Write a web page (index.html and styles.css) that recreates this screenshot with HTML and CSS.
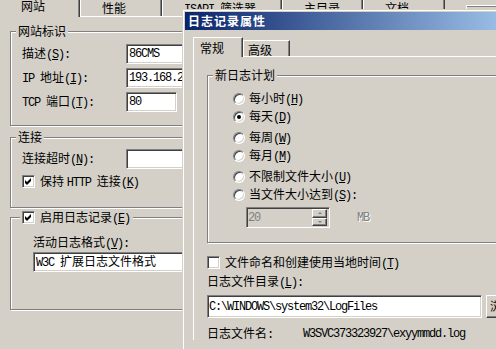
FILE: index.html
```html
<!DOCTYPE html>
<html lang="zh-CN">
<head>
<meta charset="utf-8">
<title>日志记录属性</title>
<link rel="stylesheet" href="styles.css">
</head>
<body>
<div class="back">
  <div class="btabs">
    <div class="btab sel w82">网站</div>
    <div class="btab w82">性能</div>
    <div class="btab w120"><span class="m">ISAPI </span>筛选器</div>
    <div class="btab w81">主目录</div>
    <div class="btab w82">文档</div>
    <div class="btab gapt"></div>
    <div class="btab rest"></div>
  </div>
  <div class="bpanel">
    <div class="grp g1">
      <div class="gt">网站标识</div>
      <div class="frow"><span class="lbl">描述<span class="m">(<u>S</u>):</span></span><div class="edit wide"><span class="m">86CMS</span></div></div>
      <div class="frow"><span class="lbl"><span class="m">IP </span>地址<span class="m">(<u>I</u>):</span></span><div class="edit wide"><span class="m">193.168.2.10</span></div></div>
      <div class="frow"><span class="lbl"><span class="m">TCP </span>端口<span class="m">(<u>T</u>):</span></span><div class="edit port"><span class="m">80</span></div></div>
    </div>
    <div class="grp g2">
      <div class="gt">连接</div>
      <div class="frow"><span class="lbl">连接超时<span class="m">(<u>N</u>):</span></span><div class="edit wide"></div></div>
      <div class="crow">
        <span class="cb"><svg width="7" height="7" viewBox="0 0 7 7"><polygon points="0,2 2,4 6,0 6,3 2,7 0,5"/></svg></span>
        <span>保持 <span class="m">HTTP </span>连接<span class="m">(<u>K</u>)</span></span>
      </div>
    </div>
    <div class="grp g3">
      <div class="gt gtc">
        <span class="cb"><svg width="7" height="7" viewBox="0 0 7 7"><polygon points="0,2 2,4 6,0 6,3 2,7 0,5"/></svg></span>
        <span>启用日志记录<span class="m">(<u>E</u>)</span></span>
      </div>
      <div class="plain">活动日志格式<span class="m">(<u>V</u>):</span></div>
      <div class="edit combo"><span><span class="m">W3C </span>扩展日志文件格式</span></div>
    </div>
  </div>
</div>

<div class="win">
  <div class="title">日志记录属性</div>
  <div class="fbody">
    <div class="ftabs">
      <div class="ftab sel">常规</div>
      <div class="ftab adv">高级</div>
    </div>
    <div class="fpanel">
      <div class="grp fg">
        <div class="gt">新日志计划</div>
        <div class="ropt"><span class="rd"></span><span>每小时<span class="m">(<u>H</u>)</span></span></div>
        <div class="ropt"><span class="rd on"></span><span>每天<span class="m">(<u>D</u>)</span></span></div>
        <div class="ropt sp"><span class="rd"></span><span>每周<span class="m">(<u>W</u>)</span></span></div>
        <div class="ropt"><span class="rd"></span><span>每月<span class="m">(<u>M</u>)</span></span></div>
        <div class="ropt sp"><span class="rd"></span><span>不限制文件大小<span class="m">(<u>U</u>)</span></span></div>
        <div class="ropt"><span class="rd"></span><span>当文件大小达到<span class="m">(<u>S</u>):</span></span></div>
        <div class="spinrow">
          <div class="spin">
            <span class="m spinval">20</span>
            <div class="spinbtns">
              <span class="sbtn"><i class="up"></i></span>
              <span class="sbtn"><i class="dn"></i></span>
            </div>
          </div>
          <span class="m mb">MB</span>
        </div>
      </div>
      <div class="crow lt">
        <span class="cb"></span>
        <span>文件命名和创建使用当地时间<span class="m">(<u>T</u>)</span></span>
      </div>
      <div class="plain dl">日志文件目录<span class="m">(<u>L</u>):</span></div>
      <div class="pathrow">
        <div class="edit path"><span class="m">C:\WINDOWS\system32\LogFiles</span></div>
        <div class="btn"><span>浏览<span class="m">(<u>R</u>)...</span></span></div>
      </div>
      <div class="fnrow">
        <span class="fnl">日志文件名<span class="m">:</span></span>
        <span class="m">W3SVC373323927\exyymmdd.log</span>
      </div>
    </div>
  </div>
</div>
</body>
</html>
```
FILE: styles.css
```css
* { box-sizing: border-box; }
html, body { margin: 0; padding: 0; }
body {
  width: 496px;
  height: 349px;
  overflow: hidden;
  position: relative;
  background: #d4d0c8;
  color: #000;
  font: 12px/12px "Noto Sans CJK SC", "Noto Sans CJK JP", sans-serif;
}
.m {
  font-family: "Liberation Mono", monospace;
  font-size: 12px;
  letter-spacing: -1.2px;
}
u { text-decoration: underline; text-underline-offset: 1px; }

/* ---------- back dialog ---------- */
.btabs {
  display: flex;
  align-items: flex-end;
  height: 16px;
  margin-left: -2px;
}
.btab {
  height: 17px;
  padding: 2px 0 0 21px;
  border-top: 1px solid #fff;
  border-left: 1px solid #fff;
  border-right: 1px solid #404040;
  box-shadow: inset -1px 0 #808080;
  white-space: nowrap;
  flex: none;
}
.btab.sel {
  height: 20px;
  margin-bottom: -1px;
  position: relative;
  z-index: 1;
  background: #d4d0c8;
  padding-top: 2px;
  padding-left: 22px;
}
.w82 { width: 82px; }
.w81 { width: 81px; }
.w120 { width: 120px; }
.btab.gapt { width: 11px; border: none; box-shadow: none; }
.btab.rest {
  width: 60px;
  height: 11px;
  border-right: none;
  box-shadow: inset 0 1px #808080;
}

.bpanel {
  border-top: 1px solid #fff;
  padding: 14px 0 0 10px;
}
.grp {
  position: relative;
  width: 290px;
  border: 1px solid #808080;
  box-shadow: inset 1px 1px #fff, 1px 1px #fff;
}
.gt {
  position: absolute;
  top: -7px;
  left: 5px;
  padding: 0 2px;
  background: #d4d0c8;
  line-height: 12px;
  white-space: nowrap;
}
.gtc {
  left: 9px;
  padding: 0 3px 0 2px;
  display: flex;
  align-items: center;
  gap: 5px;
  height: 13px;
}
.g1 {
  padding: 12px 0 13px 11px;
  display: flex;
  flex-direction: column;
  gap: 4px;
}
.g2 {
  margin-top: 11px;
  padding: 11px 0 19px 11px;
}
.g3 {
  margin-top: 9px;
  padding: 18px 0 37px 22px;
}
.frow {
  display: flex;
  align-items: center;
  height: 20px;
}
.lbl { width: 104px; flex: none; white-space: nowrap; }
.edit {
  height: 20px;
  flex: none;
  background: #fff;
  border: 1px solid;
  border-color: #808080 #fff #fff #808080;
  box-shadow: inset 1px 1px #404040, inset -1px -1px #d4d0c8;
  padding: 0 2px;
  display: flex;
  align-items: center;
  white-space: nowrap;
  overflow: hidden;
}
.wide { width: 160px; }
.port { width: 51px; }
.crow {
  display: flex;
  align-items: center;
  gap: 5px;
  height: 13px;
  margin-top: 6px;
  white-space: nowrap;
}
.cb {
  width: 13px;
  height: 13px;
  flex: none;
  background: #fff;
  border: 1px solid;
  border-color: #808080 #fff #fff #808080;
  box-shadow: inset 1px 1px #404040, inset -1px -1px #d4d0c8;
  display: flex;
  align-items: center;
  justify-content: center;
}
.cb svg { display: block; fill: #000; }
.plain { height: 12px; white-space: nowrap; }
.combo { width: 200px; margin-top: 4px; }

/* ---------- front dialog ---------- */
.win {
  position: absolute;
  left: 182px;
  top: 9px;
  width: 340px;
  height: 345px;
  background: #d4d0c8;
  border-top: 1px solid #d4d0c8;
  border-left: 1px solid #d4d0c8;
  box-shadow: inset 1px 1px #fff;
  padding: 2px 0 0 2px;
}
.title {
  height: 18px;
  background: linear-gradient(to right, #0a246a, #a6caf0 340px);
  color: #fff;
  font-weight: bold;
  letter-spacing: 1px;
  padding-left: 3px;
  display: flex;
  align-items: center;
}
.fbody { padding: 7px 0 0 8px; }
.ftabs {
  display: flex;
  align-items: flex-end;
  height: 19px;
}
.ftab {
  height: 16px;
  width: 47px;
  padding: 3px 0 0 4px;
  border-top: 1px solid #fff;
  border-left: 1px solid #fff;
  border-right: 1px solid #404040;
  box-shadow: inset -1px 0 #808080;
  white-space: nowrap;
  flex: none;
}
.ftab.sel {
  width: 50px;
  height: 20px;
  margin-bottom: -1px;
  padding: 4px 0 0 6px;
  position: relative;
  z-index: 1;
  background: #d4d0c8;
}
.fpanel {
  border-top: 1px solid #fff;
  border-left: 1px solid #fff;
  padding: 18px 0 0 13px;
}
.fg {
  width: 320px;
  padding: 17px 0 14px 25px;
}
.ropt {
  display: flex;
  align-items: center;
  gap: 4px;
  height: 12px;
  white-space: nowrap;
}
.ropt + .ropt { margin-top: 6px; }
.ropt.sp { margin-top: 9px; }
.rd {
  width: 12px;
  height: 12px;
  flex: none;
  border-radius: 50%;
  background: #fff;
  border: 1px solid;
  border-color: #808080 #fff #fff #808080;
  box-shadow: inset 1px 1px #404040, inset -1px -1px #d4d0c8;
  display: flex;
  align-items: center;
  justify-content: center;
}
.rd.on::after {
  content: "";
  width: 4px;
  height: 4px;
  border-radius: 50%;
  background: #000;
}
.spinrow {
  display: flex;
  align-items: center;
  margin: 6px 0 0 13px;
}
.spin {
  width: 84px;
  height: 21px;
  border: 1px solid;
  border-color: #808080 #fff #fff #808080;
  box-shadow: inset 1px 1px #404040, inset -1px -1px #d4d0c8;
  display: flex;
  align-items: center;
  justify-content: space-between;
  padding: 2px 2px 2px 1px;
}
.spinval { color: #808080; }
.spinbtns {
  display: flex;
  flex-direction: column;
  width: 15px;
  height: 17px;
}
.sbtn {
  flex: 1;
  border: 1px solid;
  border-color: #fff #404040 #404040 #fff;
  box-shadow: inset -1px -1px #808080;
  display: flex;
  align-items: center;
  justify-content: center;
}
.sbtn i { width: 0; height: 0; border-left: 2px solid transparent; border-right: 2px solid transparent; }
.sbtn i.up { border-bottom: 2px solid #808080; }
.sbtn i.dn { border-top: 2px solid #808080; }
.mb { margin-left: 27px; color: #808080; text-shadow: 1px 1px #fff; }

.crow.lt { margin-top: 13px; }
.dl { margin-top: 6px; }
.pathrow {
  display: flex;
  gap: 4px;
  margin-top: 8px;
}
.path { width: 275px; height: 23px; padding-left: 1px; }
.btn {
  width: 75px;
  height: 23px;
  flex: none;
  border: 1px solid;
  border-color: #fff #404040 #404040 #fff;
  box-shadow: inset -1px -1px #808080;
  padding: 0 0 0 3px;
  display: flex;
  align-items: center;
  white-space: nowrap;
}
.fnrow {
  display: flex;
  align-items: center;
  height: 12px;
  margin-top: 10px;
  white-space: nowrap;
}
.fnl { width: 96px; flex: none; }
```
